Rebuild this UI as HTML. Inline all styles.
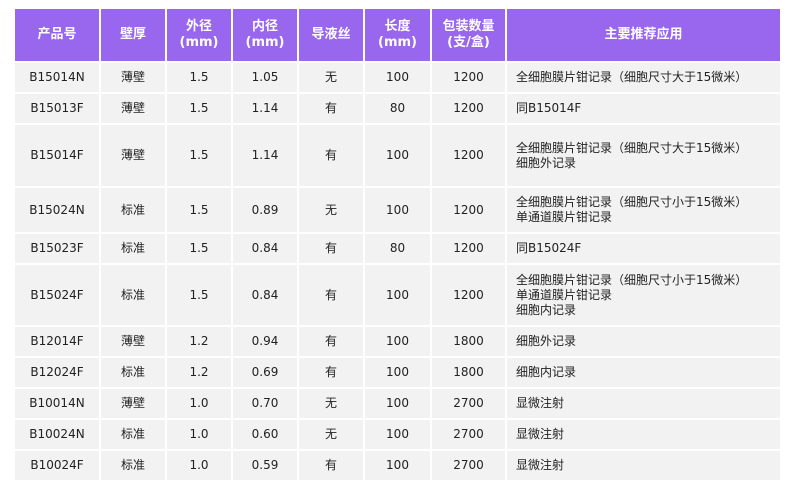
<!DOCTYPE html>
<html><head><meta charset="utf-8"><style>
body{margin:0;background:#fff;width:786px;height:495px;overflow:hidden;font-family:Verdana,"DejaVu Sans","Noto Sans CJK SC",sans-serif;}
table{position:absolute;left:13px;top:7px;border-collapse:collapse;table-layout:fixed;width:767px;}
td,th{border:2px solid #fff;background:#f2f2f2;color:#222;font-size:12px;text-align:center;padding:0;line-height:15px;font-weight:normal;}
th{background:#9966ee;color:#fff;font-weight:bold;font-size:13px;line-height:16px;}
td.l{text-align:left;padding-left:9px;}
</style></head><body>
<table>
<colgroup><col style="width:86px"><col style="width:66px"><col style="width:66px"><col style="width:66px"><col style="width:66px"><col style="width:67px"><col style="width:75px"><col style="width:275px"></colgroup>
<tr style="height:54px"><th>产品号</th><th>壁厚</th><th>外径<br>(mm)</th><th>内径<br>(mm)</th><th>导液丝</th><th>长度<br>(mm)</th><th>包装数量<br>(支/盒)</th><th>主要推荐应用</th></tr>
<tr style="height:31px"><td>B15014N</td><td>薄壁</td><td>1.5</td><td>1.05</td><td>无</td><td>100</td><td>1200</td><td class="l">全细胞膜片钳记录（细胞尺寸大于15微米）</td></tr>
<tr style="height:31px"><td>B15013F</td><td>薄壁</td><td>1.5</td><td>1.14</td><td>有</td><td>80</td><td>1200</td><td class="l">同B15014F</td></tr>
<tr style="height:63px"><td>B15014F</td><td>薄壁</td><td>1.5</td><td>1.14</td><td>有</td><td>100</td><td>1200</td><td class="l">全细胞膜片钳记录（细胞尺寸大于15微米）<br>细胞外记录</td></tr>
<tr style="height:46px"><td>B15024N</td><td>标准</td><td>1.5</td><td>0.89</td><td>无</td><td>100</td><td>1200</td><td class="l">全细胞膜片钳记录（细胞尺寸小于15微米）<br>单通道膜片钳记录</td></tr>
<tr style="height:31px"><td>B15023F</td><td>标准</td><td>1.5</td><td>0.84</td><td>有</td><td>80</td><td>1200</td><td class="l">同B15024F</td></tr>
<tr style="height:62px"><td>B15024F</td><td>标准</td><td>1.5</td><td>0.84</td><td>有</td><td>100</td><td>1200</td><td class="l">全细胞膜片钳记录（细胞尺寸小于15微米）<br>单通道膜片钳记录<br>细胞内记录</td></tr>
<tr style="height:31px"><td>B12014F</td><td>薄壁</td><td>1.2</td><td>0.94</td><td>有</td><td>100</td><td>1800</td><td class="l">细胞外记录</td></tr>
<tr style="height:31px"><td>B12024F</td><td>标准</td><td>1.2</td><td>0.69</td><td>有</td><td>100</td><td>1800</td><td class="l">细胞内记录</td></tr>
<tr style="height:31px"><td>B10014N</td><td>薄壁</td><td>1.0</td><td>0.70</td><td>无</td><td>100</td><td>2700</td><td class="l">显微注射</td></tr>
<tr style="height:31px"><td>B10024N</td><td>标准</td><td>1.0</td><td>0.60</td><td>无</td><td>100</td><td>2700</td><td class="l">显微注射</td></tr>
<tr style="height:31px"><td>B10024F</td><td>标准</td><td>1.0</td><td>0.59</td><td>有</td><td>100</td><td>2700</td><td class="l">显微注射</td></tr>
</table>
</body></html>
